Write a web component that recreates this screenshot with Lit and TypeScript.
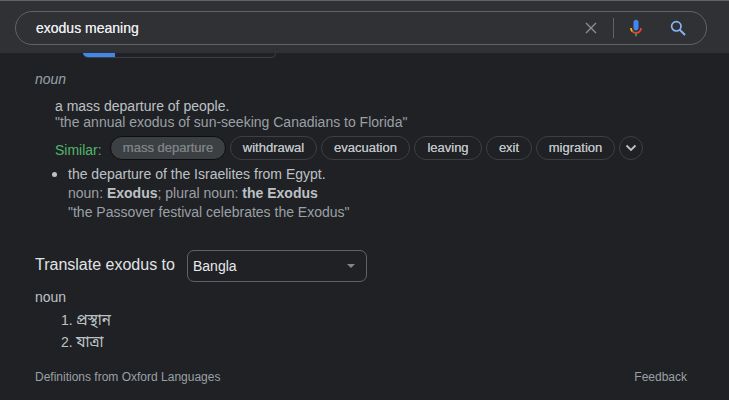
import { LitElement, html, css } from "lit";
import { customElement } from "lit/decorators.js";

const SYNONYMS = ["withdrawal", "evacuation", "leaving", "exit", "migration"];

@customElement("search-header")
class SearchHeader extends LitElement {
  static styles = css`
    :host { display: block; height: 53px; box-sizing: border-box; background: #303134; border-top: 1px solid #5f6368; padding: 10px 22px 0 15px; }
    .box { height: 34px; box-sizing: border-box; border: 1px solid #5f6368; border-radius: 17px; display: flex; align-items: center; padding: 0 20px; }
    .query { flex: 1; font-size: 14px; line-height: 20px; color: #e8eaed; text-shadow: 0 0 0.4px #e8eaed; }
    .clear { width: 12px; height: 12px; margin-right: 16px; }
    .rule { width: 1px; height: 20px; background: #5f6368; margin-right: 12px; }
    .mic { width: 20px; height: 20px; margin-right: 24px; }
    .lens { width: 16px; height: 16px; }
    svg { display: block; flex: none; }
  `;
  render() {
    return html`<div class="box">
      <div class="query">exodus meaning</div>
      <svg class="clear" viewBox="0 0 12 12"><path d="M1 1L11 11M11 1L1 11" stroke="#8b8e92" stroke-width="1.4" /></svg>
      <div class="rule"></div>
      <svg class="mic" viewBox="0 0 24 24">
        <path fill="#4285f4" d="M12 15c1.66 0 3-1.31 3-2.97v-7.02c0-1.66-1.34-3.01-3-3.01s-3 1.34-3 3.01v7.02c0 1.66 1.34 2.97 3 2.97z" />
        <path fill="#34a853" d="M11 18.08h2v3.92h-2z" />
        <path fill="#fbbc04" d="M7.05 16.87c-1.27-1.33-2.05-2.83-2.05-4.87h2c0 1.45.56 2.42 1.47 3.38v.32l-1.15 1.18z" />
        <path fill="#ea4335" d="M12 16.93a4.97 5.25 0 0 1-3.54-1.55l-1.41 1.49c1.26 1.34 3.02 2.13 4.95 2.13 3.87 0 6.99-2.92 6.99-7h-1.99c0 2.92-2.24 4.93-5 4.93z" />
      </svg>
      <svg class="lens" viewBox="0 0 16 16" fill="none" stroke="#8ab4f8"><circle cx="6.3" cy="6.3" r="4.7" stroke-width="1.7" /><path d="M9.6 9.6L15 15" stroke-width="2" /></svg>
    </div>`;
  }
}

@customElement("app-root")
class AppRoot extends LitElement {
  static styles = css`
    :host { display: block; height: 400px; overflow: hidden; background: #202124; color: #bdc1c6; font-family: "Liberation Sans", Arial, sans-serif; font-size: 14px; }
    main { padding: 0 42px 0 35px; }
    .tabs { box-sizing: border-box; width: 193px; height: 5px; margin-left: 48px; border: 1px solid #3c4043; border-top: 0; border-left: 0; border-radius: 0 0 5px 5px; overflow: hidden; }
    .bar { width: 32px; height: 5px; background: #4485ec; }
    .pos { margin-top: 11px; line-height: 20px; font-style: italic; color: #9aa0a6; }
    .sense { margin: 9px 0 0 20px; line-height: 16px; }
    .muted { color: #9aa0a6; }
    b { color: #bdc1c6; }
    .chips { display: flex; height: 24px; margin: 6px 0 0 20px; }
    .similar { width: 55px; line-height: 28px; color: #52b66a; }
    .chip { box-sizing: border-box; height: 24px; margin-right: 4px; border: 1px solid #3c4043; border-radius: 12px; text-align: center; font-size: 13px; line-height: 22px; text-shadow: 0 0 0.5px #bdc1c6; }
    .mass { width: 116px; background: #3c4043; border-color: #0c0d0e; color: #7c8084; text-shadow: 0 0 0.5px #7c8084; }
    .withdrawal { width: 87px; }
    .evacuation { width: 89px; }
    .leaving { width: 68px; }
    .exit { width: 46px; }
    .migration { width: 79px; }
    .more { width: 24px; margin: 0; display: grid; place-items: center; }
    .israel { display: flex; margin: 5px 0 0 17px; line-height: 19px; }
    .dot { width: 5px; height: 5px; border-radius: 50%; background: #bdc1c6; margin: 7px 11px 0 0; }
    .translate { display: flex; margin-top: 28px; height: 32px; }
    .title { width: 152px; font-size: 16px; line-height: 30px; color: #e0e2e5; white-space: nowrap; }
    .select { box-sizing: border-box; width: 180px; height: 32px; border: 1px solid #5f6368; border-radius: 7px; display: flex; align-items: center; justify-content: space-between; padding: 0 11px 0 5px; color: #e8eaed; }
    .kind { margin-top: 5px; line-height: 20px; }
    ol { margin: 2px 0 0 26px; padding: 0; list-style: none; line-height: 22px; }
    li { display: flex; height: 22px; }
    .num { width: 15px; }
    .bn { font-family: "Liberation Sans", "Noto Sans Bengali", sans-serif; font-size: 15.2px; }
    footer { display: flex; justify-content: space-between; margin-top: 16px; font-size: 12px; line-height: 16px; color: #9aa0a6; }
  `;
  render() {
    return html`
      <search-header></search-header>
      <main>
        <div class="tabs"><div class="bar"></div></div>
        <div class="pos">noun</div>
        <div class="sense">
          <div>a mass departure of people.</div>
          <div class="muted">"the annual exodus of sun-seeking Canadians to Florida"</div>
        </div>
        <div class="chips">
          <div class="similar">Similar:</div>
          <div class="chip mass">mass departure</div>
          ${SYNONYMS.map((w) => html`<div class="chip ${w}">${w}</div>`)}
          <div class="chip more"><svg width="12" height="8" viewBox="0 0 12 8"><path d="M1.5 1.5L6 6L10.5 1.5" fill="none" stroke="#bdc1c6" stroke-width="1.8" /></svg></div>
        </div>
        <div class="israel">
          <div class="dot"></div>
          <div>
            <div>the departure of the Israelites from Egypt.</div>
            <div class="muted">noun: <b>Exodus</b>; plural noun: <b>the Exodus</b></div>
            <div class="muted">"the Passover festival celebrates the Exodus"</div>
          </div>
        </div>
        <div class="translate">
          <div class="title">Translate exodus to</div>
          <div class="select"><span>Bangla</span><svg width="8" height="4" viewBox="0 0 8 4"><path d="M0 0H8L4 4Z" fill="#80868b" /></svg></div>
        </div>
        <div class="kind">noun</div>
        <ol>
          <li><span class="num">1.</span><span class="bn">প্রস্থান</span></li>
          <li><span class="num">2.</span><span class="bn">যাত্রা</span></li>
        </ol>
        <footer><span>Definitions from Oxford Languages</span><span>Feedback</span></footer>
      </main>`;
  }
}
